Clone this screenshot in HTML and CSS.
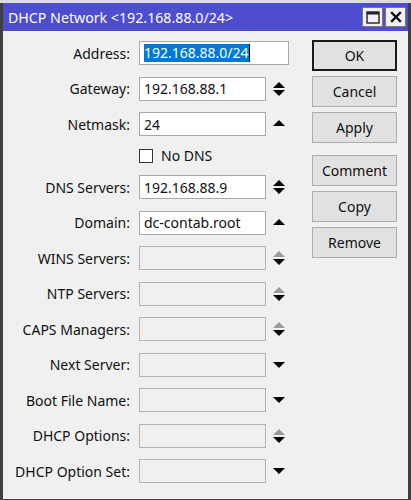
FILE: index.html
```html
<!DOCTYPE html>
<html>
<head>
<meta charset="utf-8">
<link rel="stylesheet" href="styles.css">
</head>
<body>
<div class="window">
  <div class="titlebar">
    <span class="title">DHCP Network &lt;192.168.88.0/24&gt;</span>
    <div class="winbtns">
      <div class="winbtn">
        <svg width="14" height="13" viewBox="0 0 14 13"><rect x="1" y="1" width="12" height="11" fill="none" stroke="#222" stroke-width="1.4"/><rect x="1" y="1" width="12" height="2.5" fill="#222"/></svg>
      </div>
      <div class="winbtn">
        <svg width="12" height="12" viewBox="0 0 12 12"><path d="M2 2 L10 10 M10 2 L2 10" stroke="#111" stroke-width="2.4" stroke-linecap="square"/></svg>
      </div>
    </div>
  </div>
  <div class="content">
    <div class="form">
      <div class="row">
        <label class="lbl">Address:</label>
        <div class="field wide"><span class="sel">192.168.88.0/24</span><span class="caret"></span></div>
      </div>
      <div class="row">
        <label class="lbl">Gateway:</label>
        <div class="field">192.168.88.1</div>
        <svg class="ico" width="14" height="16" viewBox="0 0 14 16"><path d="M7 1 L13 7 L1 7 Z" fill="#000"/><path d="M1 9 L13 9 L7 15 Z" fill="#000"/></svg>
      </div>
      <div class="row">
        <label class="lbl">Netmask:</label>
        <div class="field">24</div>
        <svg class="ico" width="14" height="16" viewBox="0 0 14 16"><path d="M7 4 L13 10 L1 10 Z" fill="#000"/></svg>
      </div>
      <div class="row check-row">
        <span class="lbl"></span>
        <span class="checkbox"></span>
        <span class="check-text">No DNS</span>
      </div>
      <div class="row">
        <label class="lbl">DNS Servers:</label>
        <div class="field">192.168.88.9</div>
        <svg class="ico" width="14" height="16" viewBox="0 0 14 16"><path d="M7 1 L13 7 L1 7 Z" fill="#000"/><path d="M1 9 L13 9 L7 15 Z" fill="#000"/></svg>
      </div>
      <div class="row">
        <label class="lbl">Domain:</label>
        <div class="field">dc-contab.root</div>
        <svg class="ico" width="14" height="16" viewBox="0 0 14 16"><path d="M7 4 L13 10 L1 10 Z" fill="#000"/></svg>
      </div>
      <div class="row">
        <label class="lbl">WINS Servers:</label>
        <div class="field off"></div>
        <svg class="ico" width="14" height="16" viewBox="0 0 14 16"><path d="M7 1 L13 7 L1 7 Z" fill="#9a9a9a"/><path d="M1 9 L13 9 L7 15 Z" fill="#000"/></svg>
      </div>
      <div class="row">
        <label class="lbl">NTP Servers:</label>
        <div class="field off"></div>
        <svg class="ico" width="14" height="16" viewBox="0 0 14 16"><path d="M7 1 L13 7 L1 7 Z" fill="#9a9a9a"/><path d="M1 9 L13 9 L7 15 Z" fill="#000"/></svg>
      </div>
      <div class="row">
        <label class="lbl">CAPS Managers:</label>
        <div class="field off"></div>
        <svg class="ico" width="14" height="16" viewBox="0 0 14 16"><path d="M7 1 L13 7 L1 7 Z" fill="#9a9a9a"/><path d="M1 9 L13 9 L7 15 Z" fill="#000"/></svg>
      </div>
      <div class="row">
        <label class="lbl">Next Server:</label>
        <div class="field off"></div>
        <svg class="ico" width="14" height="16" viewBox="0 0 14 16"><path d="M1 5 L13 5 L7 11 Z" fill="#000"/></svg>
      </div>
      <div class="row">
        <label class="lbl">Boot File Name:</label>
        <div class="field off"></div>
        <svg class="ico" width="14" height="16" viewBox="0 0 14 16"><path d="M1 5 L13 5 L7 11 Z" fill="#000"/></svg>
      </div>
      <div class="row">
        <label class="lbl">DHCP Options:</label>
        <div class="field off"></div>
        <svg class="ico" width="14" height="16" viewBox="0 0 14 16"><path d="M7 1 L13 7 L1 7 Z" fill="#9a9a9a"/><path d="M1 9 L13 9 L7 15 Z" fill="#000"/></svg>
      </div>
      <div class="row">
        <label class="lbl">DHCP Option Set:</label>
        <div class="field off"></div>
        <svg class="ico" width="14" height="16" viewBox="0 0 14 16"><path d="M1 5 L13 5 L7 11 Z" fill="#000"/></svg>
      </div>
    </div>
    <div class="buttons">
      <div class="btn default">OK</div>
      <div class="btn">Cancel</div>
      <div class="btn">Apply</div>
      <div class="btn group">Comment</div>
      <div class="btn">Copy</div>
      <div class="btn">Remove</div>
    </div>
  </div>
</div>
</body>
</html>
```

FILE: styles.css
```css
html, body {
  margin: 0;
  padding: 0;
}

body {
  width: 411px;
  height: 500px;
  background: #dcdcdc;
  font-family: "Noto Sans", "DejaVu Sans", sans-serif;
  font-size: 14px;
  color: #111;
  overflow: hidden;
}

.window {
  box-sizing: border-box;
  width: 411px;
  height: 500px;
  margin-top: 3px;
  border-left: 3px solid #3f3f3f;
  border-right: 3px solid #3f3f3f;
  border-bottom: 4px solid #3f3f3f;
  background: #f0f0f0;
  display: flex;
  flex-direction: column;
}

.titlebar {
  height: 28px;
  background: #4d4dcd;
  display: flex;
  align-items: center;
  justify-content: space-between;
  padding-left: 5px;
  padding-right: 2px;
}

.title {
  color: #fff;
  font-size: 14.2px;
}

.winbtns {
  display: flex;
  gap: 2px;
}

.winbtn {
  width: 19px;
  height: 18px;
  background: #f0f0f0;
  border: 1px solid #7a7a7a;
  display: flex;
  align-items: center;
  justify-content: center;
}

.content {
  flex: 1;
  display: flex;
  padding-top: 9px;
}

.form {
  display: flex;
  flex-direction: column;
  gap: 11.5px;
  padding-top: 1px;
}

.row {
  display: flex;
  align-items: center;
  height: 24px;
}

.lbl {
  width: 127px;
  margin-right: 9px;
  text-align: right;
  white-space: nowrap;
}

.field {
  box-sizing: border-box;
  width: 127px;
  height: 24px;
  background: #fff;
  border: 1px solid #a8a8a8;
  padding-left: 4px;
  display: flex;
  align-items: center;
  white-space: nowrap;
}

.field.wide {
  width: 150px;
}

.field.off {
  background: #f0f0f0;
  border-color: #b2b2b2;
}

.sel {
  background: #0078d7;
  color: #fff;
  line-height: 18px;
}

.caret {
  width: 1px;
  height: 18px;
  background: #000;
}

.ico {
  margin-left: 6px;
  flex: none;
}

.check-row {
  height: 16px;
}

.checkbox {
  box-sizing: border-box;
  width: 14px;
  height: 14px;
  background: #fff;
  border: 1px solid #333;
  margin-right: 8px;
}

.buttons {
  margin-left: 23px;
  display: flex;
  flex-direction: column;
  gap: 5px;
}

.btn {
  box-sizing: border-box;
  width: 85px;
  height: 31px;
  background: #e1e1e1;
  border: 1px solid #adadad;
  display: flex;
  align-items: center;
  justify-content: center;
}

.btn.default {
  border: 2px solid #1a1a1a;
}

.btn.group {
  margin-top: 7px;
}
```
